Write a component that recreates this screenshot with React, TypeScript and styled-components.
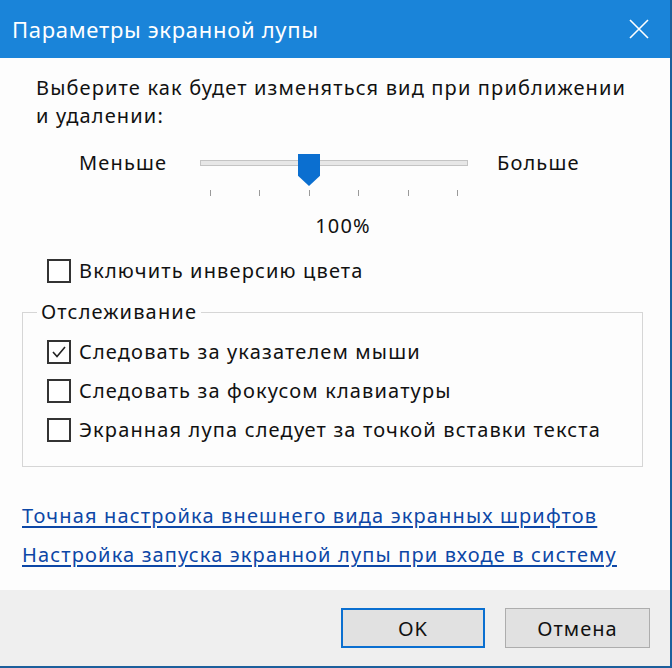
import React from 'react';
import styled, { createGlobalStyle } from 'styled-components';

const GlobalStyle = createGlobalStyle`
  html, body {
    margin: 0;
    padding: 0;
    background: #ffffff;
  }
  body {
    font-family: 'Noto Sans', 'Open Sans', sans-serif;
    color: #111111;
  }
`;

const Dialog = styled.div`
  width: 672px;
  height: 668px;
  box-sizing: border-box;
  display: flex;
  flex-direction: column;
  border-right: 2px solid #1d5f9c;
  border-bottom: 2px solid #1d5f9c;
  background: #fdfdfd;
`;

const TitleBar = styled.header`
  height: 58px;
  flex: none;
  background: #1a84d9;
  color: #ffffff;
  display: flex;
  align-items: center;
  justify-content: space-between;
  padding: 0 20px 0 12px;
  font-size: 22px;
  letter-spacing: 0.7px;
`;

const CloseButton = styled.button`
  background: none;
  border: none;
  padding: 0;
  width: 22px;
  height: 22px;
  display: flex;
  align-items: center;
  justify-content: center;
`;

const Content = styled.main`
  flex: 1;
  display: flex;
  flex-direction: column;
  padding-top: 16px;
  font-size: 20px;
  letter-spacing: 1.15px;
  line-height: 28px;
`;

const Intro = styled.p`
  margin: 0;
  padding-left: 36px;
`;

const SliderRow = styled.div`
  display: flex;
  align-items: center;
  height: 46px;
  margin-top: 10px;
`;

const SideLabel = styled.span<{ $left?: boolean }>`
  ${(p) => (p.$left ? 'width: 121px; padding-left: 79px;' : 'padding-left: 29px;')}
`;

const TrackWrap = styled.div`
  position: relative;
  width: 268px;
  height: 46px;
  display: flex;
  align-items: center;
`;

const Track = styled.div`
  width: 100%;
  height: 4px;
  background: #e7e7e7;
  border: 1px solid #c4c4c4;
`;

const Thumb = styled.div`
  position: absolute;
  left: 98px;
  top: 14px;
  width: 22px;
  height: 32px;
  background: #0b6fd0;
  clip-path: polygon(0 0, 100% 0, 100% 68%, 50% 100%, 0 68%);
`;

const Ticks = styled.div`
  margin-left: 200px;
  width: 268px;
  box-sizing: border-box;
  padding: 0 10px;
  margin-top: 4px;
  display: flex;
  justify-content: space-between;
`;

const Tick = styled.span`
  width: 1px;
  height: 6px;
  background: #9a9a9a;
`;

const Percent = styled.div`
  margin-top: 16px;
  padding-left: 16px;
  text-align: center;
`;

const CheckRow = styled.label`
  display: flex;
  align-items: center;
  gap: 8px;
  height: 28px;
`;

const Box = styled.span`
  width: 20px;
  height: 20px;
  border: 2px solid #333333;
  background: #ffffff;
  display: flex;
  align-items: center;
  justify-content: center;
  flex: none;
`;

const TopCheck = styled.div`
  margin-top: 17px;
  padding-left: 47px;
`;

const Group = styled.fieldset`
  margin: 13px 27px 0 22px;
  padding: 12px 0 22px 24px;
  border: 1px solid #d6d6d6;
  display: flex;
  flex-direction: column;
  gap: 11px;
`;

const Legend = styled.legend`
  margin-left: -10px;
  padding: 0 4px;
  line-height: 28px;
`;

const Links = styled.div`
  margin-top: 35px;
  padding-left: 22px;
  display: flex;
  flex-direction: column;
  gap: 11px;
`;

const Link = styled.a`
  color: #0d47a6;
  text-decoration: underline;
  text-underline-offset: 3px;
  line-height: 28px;
  align-self: flex-start;
`;

const Footer = styled.footer`
  height: 76px;
  flex: none;
  background: #efefef;
  display: flex;
  align-items: center;
  justify-content: flex-end;
  gap: 20px;
  padding-right: 20px;
`;

const Button = styled.button<{ $primary?: boolean }>`
  width: ${(p) => (p.$primary ? 144 : 145)}px;
  height: 40px;
  box-sizing: border-box;
  font-family: 'Noto Sans', 'Open Sans', sans-serif;
  font-size: 20px;
  letter-spacing: 1px;
  color: #111111;
  background: #e1e1e1;
  border: ${(p) => (p.$primary ? '2px solid #0a6fd0' : '1px solid #adadad')};
`;

const Check = ({ checked, children }: { checked?: boolean; children: React.ReactNode }) => (
  <CheckRow>
    <Box>
      {checked && (
        <svg width="18" height="18" viewBox="0 0 18 18">
          <polyline points="3,9 7,13.5 15,4" fill="none" stroke="#222" strokeWidth="1.6" />
        </svg>
      )}
    </Box>
    {children}
  </CheckRow>
);

export default function App() {
  return (
    <>
      <GlobalStyle />
      <Dialog>
        <TitleBar>
          <span>Параметры экранной лупы</span>
          <CloseButton aria-label="Закрыть">
            <svg width="20" height="20" viewBox="0 0 20 20">
              <path d="M1 1 L19 19 M19 1 L1 19" stroke="#ffffff" strokeWidth="1.6" />
            </svg>
          </CloseButton>
        </TitleBar>
        <Content>
          <Intro>
            Выберите как будет изменяться вид при приближении
            <br />и удалении:
          </Intro>
          <SliderRow>
            <SideLabel $left>Меньше</SideLabel>
            <TrackWrap>
              <Track />
              <Thumb />
            </TrackWrap>
            <SideLabel>Больше</SideLabel>
          </SliderRow>
          <Ticks>
            {[0, 1, 2, 3, 4, 5].map((i) => (
              <Tick key={i} />
            ))}
          </Ticks>
          <Percent>100%</Percent>
          <TopCheck>
            <Check>Включить инверсию цвета</Check>
          </TopCheck>
          <Group>
            <Legend>Отслеживание</Legend>
            <Check checked>Следовать за указателем мыши</Check>
            <Check>Следовать за фокусом клавиатуры</Check>
            <Check>Экранная лупа следует за точкой вставки текста</Check>
          </Group>
          <Links>
            <Link href="#">Точная настройка внешнего вида экранных шрифтов</Link>
            <Link href="#">Настройка запуска экранной лупы при входе в систему</Link>
          </Links>
        </Content>
        <Footer>
          <Button $primary>OK</Button>
          <Button>Отмена</Button>
        </Footer>
      </Dialog>
    </>
  );
}
